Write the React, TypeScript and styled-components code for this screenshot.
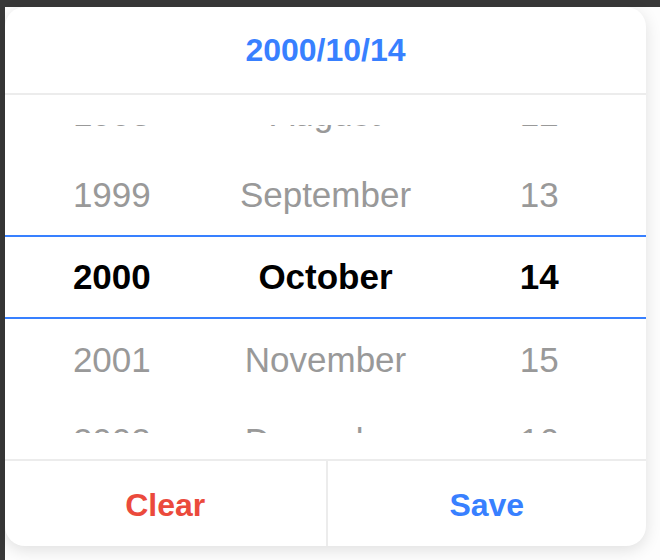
import styled, { createGlobalStyle } from 'styled-components'

const years = ['1998', '1999', '2000', '2001', '2002']
const months = ['August', 'September', 'October', 'November', 'December']
const days = ['12', '13', '14', '15', '16']
const selected = 2

const GlobalStyle = createGlobalStyle`
  html, body {
    margin: 0;
    padding: 0;
    background: #383838;
    font-family: "Liberation Sans", Arial, sans-serif;
  }
`

const App = () => {
  return (
    <>
      <GlobalStyle />
      <Page>
        <Card>
          <Header>2000/10/14</Header>

          <Body>
            <Wheel>
              <Reel>
                {years.map((year, i) => (
                  <Row key={year} $active={i === selected}>
                    <Cell $active={i === selected}>{ year }</Cell>
                    <Cell $active={i === selected}>{ months[i] }</Cell>
                    <Cell $active={i === selected}>{ days[i] }</Cell>
                  </Row>
                ))}
              </Reel>
            </Wheel>
          </Body>

          <Footer>
            <FooterButton $tone='danger'>Clear</FooterButton>
            <FooterButton $tone='primary'>Save</FooterButton>
          </Footer>
        </Card>
      </Page>
    </>
  )
}

const Page = styled.div`
  margin: 7px 0 0 5px;
  height: 553px;
  background: #fdfdfd;
`

const Card = styled.div`
  width: 641px;
  height: 539px;
  display: flex;
  flex-direction: column;
  background: #ffffff;
  border-radius: 20px;
  box-shadow: 0 4px 16px rgba(0, 0, 0, 0.12);
  overflow: hidden;
`

const Header = styled.div`
  height: 86px;
  flex-shrink: 0;
  display: flex;
  align-items: center;
  justify-content: center;
  border-bottom: 2px solid #ececec;
  color: #3880ff;
  font-size: 32px;
  font-weight: bold;
`

const Body = styled.div`
  height: 364px;
  flex-shrink: 0;
  box-sizing: border-box;
  padding: 30px 0 26px;
`

const Wheel = styled.div`
  height: 308px;
  overflow: hidden;
`

const Reel = styled.div`
  margin-top: -52px;
  display: flex;
  flex-direction: column;
`

const Row = styled.div<{ $active: boolean }>`
  flex-shrink: 0;
  height: ${p => p.$active ? '84px' : '81px'};
  box-sizing: border-box;
  display: grid;
  grid-template-columns: 1fr 1fr 1fr;
  align-items: center;
  border-top: ${p => p.$active ? '2px solid #3880ff' : 'none'};
  border-bottom: ${p => p.$active ? '2px solid #3880ff' : 'none'};
`

const Cell = styled.div<{ $active: boolean }>`
  text-align: center;
  font-size: 35px;
  line-height: 40px;
  color: ${p => p.$active ? '#000000' : '#999999'};
  font-weight: ${p => p.$active ? 'bold' : 'normal'};
  white-space: nowrap;
`

const Footer = styled.div`
  height: 85px;
  flex-shrink: 0;
  display: grid;
  grid-template-columns: 1fr 1fr;
  border-top: 2px solid #ececec;
`

const FooterButton = styled.div<{ $tone: 'danger' | 'primary' }>`
  display: flex;
  align-items: center;
  justify-content: center;
  padding-top: 3px;
  font-size: 32px;
  font-weight: bold;
  color: ${p => p.$tone === 'danger' ? '#eb4a3c' : '#3880ff'};

  & + & {
    border-left: 2px solid #ececec;
  }
`

export default App
